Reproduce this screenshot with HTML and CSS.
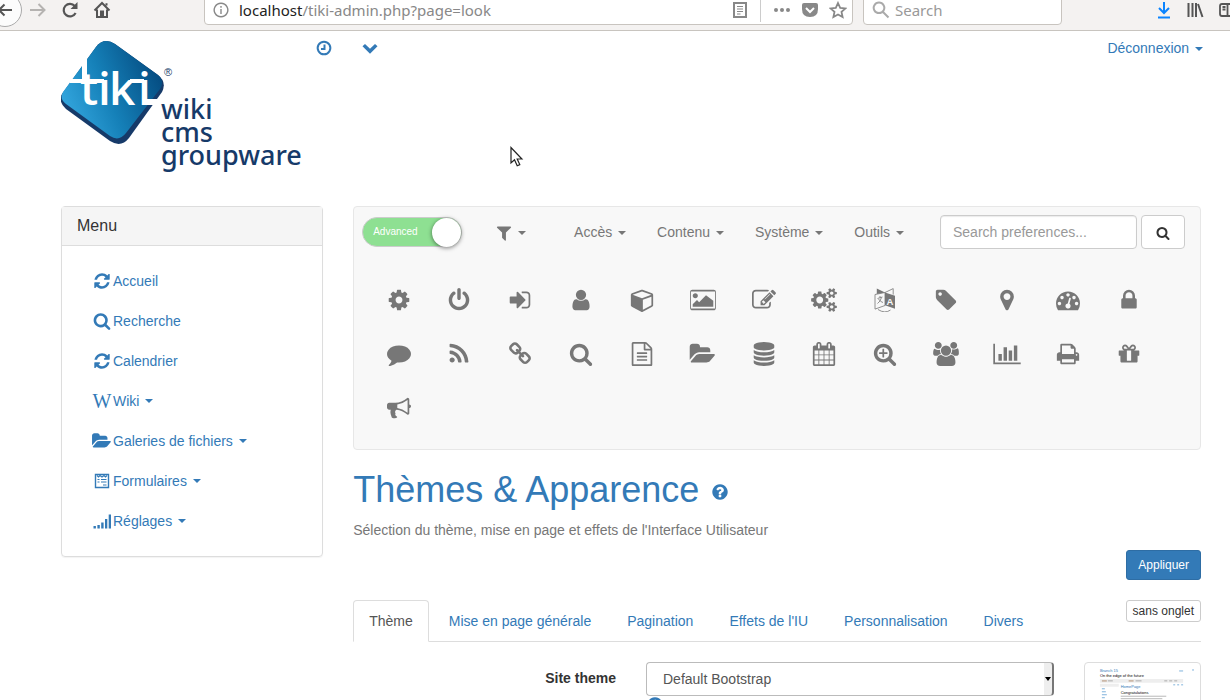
FILE: index.html
```
<!DOCTYPE html>
<html lang="fr">
<head>
    <meta charset="UTF-8">
    <meta name="viewport" content="width=device-width, initial-scale=1.0">
    <title>Thèmes &amp; Apparence</title>
    <link rel="stylesheet" href="styles.css">
</head>
<body>
    <!-- icon sprite -->
    <svg class="sprite" aria-hidden="true">
        <symbol id="i-cog" viewBox="0 0 1792 1792"><path d="M1152 896q0-106-75-181t-181-75-181 75-75 181 75 181 181 75 181-75 75-181zm512-109v222q0 12-8 23t-20 13l-185 28q-19 54-39 91 35 50 107 138 10 12 10 25t-9 23q-27 37-99 108t-94 71q-12 0-26-9l-138-108q-44 23-91 38-16 136-29 186-7 28-36 28h-222q-14 0-24.5-8.5t-11.5-21.5l-28-184q-49-16-90-37l-141 107q-10 9-25 9-14 0-25-11-126-114-165-168-7-10-7-23 0-12 8-23 15-21 51-66.5t54-70.5q-27-50-41-99l-183-27q-13-2-21-12.5t-8-23.5v-222q0-12 8-23t19-13l186-28q14-46 39-92-40-57-107-138-10-12-10-24 0-10 9-23 26-36 98.5-107.5t94.5-71.5q13 0 26 10l138 107q44-23 91-38 16-136 29-186 7-28 36-28h222q14 0 24.5 8.5t11.5 21.5l28 184q49 16 90 37l142-107q9-9 24-9 13 0 25 10 129 119 165 170 7 8 7 22 0 12-8 23-15 21-51 66.5t-54 70.5q26 50 41 98l183 28q13 2 21 12.5t8 23.5z"/></symbol>
        <symbol id="i-power" viewBox="0 0 1792 1792"><path d="M1664 896q0 156-61 298t-164 245-245 164-298 61-298-61-245-164-164-245-61-298q0-182 80.5-343t226.5-270q43-32 95.5-25t83.5 50q32 42 24.5 94.5t-49.5 84.5q-98 74-151.5 181t-53.5 228q0 104 40.5 198.5t109.5 163.5 163.5 109.5 198.5 40.5 198.5-40.5 163.5-109.5 109.5-163.5 40.5-198.5q0-121-53.5-228t-151.5-181q-42-32-49.5-84.5t24.5-94.5q31-43 84-50t95 25q146 109 226.5 270t80.5 343zm-640-768v640q0 52-38 90t-90 38-90-38-38-90v-640q0-52 38-90t90-38 90 38 38 90z"/></symbol>
        <symbol id="i-login" viewBox="0 0 1792 1792"><path d="M1312 896q0 26-19 45l-544 544q-19 19-45 19t-45-19-19-45v-288h-448q-26 0-45-19t-19-45v-384q0-26 19-45t45-19h448v-288q0-26 19-45t45-19 45 19l544 544q19 19 19 45zm352-352v704q0 119-84.5 203.5t-203.5 84.5h-320q-13 0-22.500-9.500t-9.500-22.500q0-4-1-20t-.5-26.500 3-23.500 10-19.500 20.500-6.500h320q66 0 113-47t47-113v-704q0-66-47-113t-113-47h-312l-11.500-1-11.500-3-8-5.500-7-9-2-13.500q0-4-1-20t-.5-26.500 3-23.500 10-19.500 20.500-6.500h320q119 0 203.500 84.500t84.500 203.500z"/></symbol>
        <symbol id="i-user" viewBox="0 0 1792 1792"><path d="M1536 1399q0 109-62.5 187t-150.5 78h-854q-88 0-150.5-78t-62.5-187q0-85 8.5-160.5t31.5-152 58.5-131 94-89 134.5-34.5q131 128 313 128t313-128q76 0 134.5 34.5t94 89 58.5 131 31.5 152 8.5 160.5zm-256-887q0 159-112.5 271.5t-271.5 112.5-271.5-112.5-112.5-271.5 112.5-271.5 271.5-112.5 271.5 112.5 112.5 271.5z"/></symbol>
        <symbol id="i-cube" viewBox="0 0 1664 1792"><path d="M896 1629l640-349v-636l-640 233v752zm-64-865l698-254-698-254-698 254zm832-252v768q0 35-18 65t-49 47l-704 384q-28 16-61 16t-61-16l-704-384q-31-17-49-47t-18-65v-768q0-40 23-73t61-47l704-256q22-8 44-8t44 8l704 256q38 14 61 47t23 73z"/></symbol>
        <symbol id="i-picture" viewBox="0 0 1920 1792"><path d="M576 576q0 80-56 136t-136 56-136-56-56-136 56-136 136-56 136 56 56 136zm1152 384v448h-1536v-192l320-320 160 160 512-512zm96-704h-1728q-13 0-22.500 9.500t-9.500 22.500v1216q0 13 9.500 22.500t22.500 9.500h1728q13 0 22.500-9.500t9.500-22.500v-1216q0-13-9.500-22.500t-22.500-9.500zm96 32v1216q0 66-47 113t-113 47h-1600q-66 0-113-47t-47-113v-1216q0-66 47-113t113-47h1600q66 0 113 47t47 113z"/></symbol>
        <symbol id="i-edit" viewBox="0 0 1792 1792"><path d="M888 1184l116-116-152-152-116 116v56h96v96h56zm440-720q-16-16-33 1l-350 350q-17 17-1 33t33-1l350-350q17-17 1-33zm80 594v190q0 119-84.5 203.500t-203.500 84.500h-832q-119 0-203.500-84.500t-84.500-203.500v-832q0-119 84.500-203.500t203.500-84.500h832q63 0 117 25 15 7 18 23 3 17-9 29l-49 49q-14 14-32 8-23-6-45-6h-832q-66 0-113 47t-47 113v832q0 66 47 113t113 47h832q66 0 113-47t47-113v-126q0-13 9-22l64-64q15-15 35-7t20 29zm-96-738l288 288-672 672h-288v-288zm444 132l-92 92-288-288 92-92q28-28 68-28t68 28l152 152q28 28 28 68t-28 68z"/></symbol>
        <symbol id="i-cogs" viewBox="0 0 1920 1792"><path d="M896 896q0-106-75-181t-181-75-181 75-75 181 75 181 181 75 181-75 75-181zm768 512q0-52-38-90t-90-38-90 38-38 90q0 53 37.500 90.500t90.500 37.500 90.500-37.500 37.500-90.500zm0-1024q0-52-38-90t-90-38-90 38-38 90q0 53 37.500 90.500t90.500 37.500 90.500-37.500 37.500-90.500zm-384 421v185q0 10-7 19.500t-16 10.500l-155 24q-11 35-32 76 34 48 90 115 7 11 7 20 0 12-7 19-23 30-82.500 89.500t-78.500 59.500q-11 0-21-7l-115-90q-37 19-77 31-11 108-23 155-7 24-30 24h-186q-11 0-20-7.500t-10-17.500l-23-153q-34-10-75-31l-118 89q-7 7-20 7-11 0-21-8-144-133-144-160 0-9 7-19 10-14 41-53t47-61q-23-44-35-82l-152-24q-10-1-17-9.500t-7-19.500v-185q0-10 7-19.500t16-10.500l155-24q11-35 32-76-34-48-90-115-7-11-7-20 0-12 7-20 22-30 82-89t79-59q11 0 21 7l115 90q34-18 77-32 11-108 23-154 7-24 30-24h186q11 0 20 7.500t10 17.500l23 153q34 10 75 31l118-89q8-7 20-7 11 0 21 8 144 133 144 160 0 8-7 19-12 16-42 54t-45 60q23 48 34 82l152 23q10 2 17 10.500t7 19.500zm640 533v140q0 16-149 31-12 27-30 52 51 113 51 138 0 4-4 7-122 71-124 71-8 0-46-47t-52-68q-20 2-30 2t-30-2q-14 21-52 68t-46 47q-2 0-124-71-4-3-4-7 0-25 51-138-18-25-30-52-149-15-149-31v-140q0-16 149-31 13-29 30-52-51-113-51-138 0-4 4-7 4-2 35-20t59-34 30-16q8 0 46 46.500t52 67.500q20-2 30-2t30 2q51-71 92-112l6-2q4 0 124 70 4 3 4 7 0 25-51 138 17 23 30 52 149 15 149 31zm0-1024v140q0 16-149 31-12 27-30 52 51 113 51 138 0 4-4 7-122 71-124 71-8 0-46-47t-52-68q-20 2-30 2t-30-2q-14 21-52 68t-46 47q-2 0-124-71-4-3-4-7 0-25 51-138-18-25-30-52-149-15-149-31v-140q0-16 149-31 13-29 30-52-51-113-51-138 0-4 4-7 4-2 35-20t59-34 30-16q8 0 46 46.500t52 67.500q20-2 30-2t30 2q51-71 92-112l6-2q4 0 124 70 4 3 4 7 0 25-51 138 17 23 30 52 149 15 149 31z"/></symbol>
        <symbol id="i-language" viewBox="0 0 24 24">
            <path d="M12 4.500l10 3.200v13l-10-3.500zM3.800.6L12 4.500 3.800 6z"/>
            <path d="M2 6.500l10-2v13l-10 3.600zM12 4.500L20.200.6v6M5 21.500q7 4.500 12.500.5M4.500 10.500l5-1.500M7 8v1.800M8.500 9.500q-1 4-4 6M5.500 11q2 3 4.500 3.500" fill="none" stroke="currentColor" stroke-width=".8"/>
            <text x="13.600" y="16.800" font-family="Liberation Sans, sans-serif" font-weight="bold" font-size="9.500" fill="#f8f8f8">A</text>
        </symbol>
        <symbol id="i-tag" viewBox="0 0 1515 1792"><path d="M448 448q0-53-37.500-90.500t-90.500-37.500-90.500 37.500-37.500 90.500 37.500 90.500 90.500 37.500 90.500-37.500 37.500-90.500zm1067 576q0 53-37 90l-491 492q-39 37-91 37-53 0-90-37l-715-716q-38-37-64.500-101t-26.500-117v-416q0-52 38-90t90-38h416q53 0 117 26.500t102 64.500l715 714q37 39 37 91z"/></symbol>
        <symbol id="i-marker" viewBox="0 0 1792 1792"><path d="M1152 640q0-106-75-181t-181-75-181 75-75 181 75 181 181 75 181-75 75-181zm256 0q0 109-33 179l-364 774q-16 33-47.500 52t-67.500 19-67.500-19-46.500-52l-365-774q-33-70-33-179 0-212 150-362t362-150 362 150 150 362z"/></symbol>
        <symbol id="i-dashboard" viewBox="0 0 1792 1792"><path d="M384 1152q0-53-37.500-90.500t-90.500-37.500-90.500 37.500-37.500 90.500 37.500 90.500 90.500 37.500 90.500-37.500 37.500-90.500zm192-448q0-53-37.500-90.500t-90.500-37.500-90.500 37.500-37.500 90.500 37.500 90.500 90.500 37.500 90.500-37.500 37.500-90.500zm428 481l101-382q6-26-7.500-48.500t-38.500-29.500-48 6.500-30 39.500l-101 382q-60 5-107 43.500t-63 98.500q-20 77 20 146t117 89 146-20 89-117q16-60-6-117t-72-91zm660-33q0-53-37.500-90.500t-90.500-37.500-90.500 37.500-37.500 90.500 37.500 90.500 90.500 37.500 90.500-37.500 37.500-90.500zm-640-640q0-53-37.500-90.500t-90.500-37.500-90.500 37.500-37.500 90.500 37.500 90.500 90.500 37.500 90.500-37.500 37.500-90.500zm448 192q0-53-37.500-90.500t-90.500-37.500-90.500 37.500-37.500 90.500 37.500 90.500 90.500 37.500 90.500-37.500 37.500-90.500zm320 448q0 261-141 483-19 29-54 29h-1402q-35 0-54-29-141-221-141-483 0-182 71-348t191-286 286-191 348-71 348 71 286 191 191 286 71 348z"/></symbol>
        <symbol id="i-lock" viewBox="0 0 1792 1792"><path d="M640 768h512v-192q0-106-75-181t-181-75-181 75-75 181v192zm832 96v576q0 40-28 68t-68 28h-960q-40 0-68-28t-28-68v-576q0-40 28-68t68-28h32v-192q0-184 132-316t316-132 316 132 132 316v192h32q40 0 68 28t28 68z"/></symbol>
        <symbol id="i-comment" viewBox="0 0 1792 1792"><path d="M1792 896q0 174-120 321.500t-326 233-450 85.500q-70 0-145-8-198 175-460 242-49 14-114 22-17 2-30.500-9t-17.500-29v-1q-3-4-.5-12t2-10 4.500-9.500l6-9 7-8.500 8-9q7-8 31-34.500t34.500-38 31-39.500 32.500-51 27-59 26-76q-157-89-247.500-220t-90.500-281q0-174 120-321.500t326-233 450-85.500 450 85.500 326 233 120 321.500z"/></symbol>
        <symbol id="i-rss" viewBox="0 0 1792 1792"><path d="M576 1344q0 80-56 136t-136 56-136-56-56-136 56-136 136-56 136 56 56 136zm512 123q2 28-17 48-18 21-47 21h-135q-25 0-43-16.500t-20-41.500q-22-229-184.500-391.500t-391.500-184.500q-25-2-41.500-20t-16.500-43v-135q0-29 21-47 17-17 43-17h5q160 13 306 80.500t259 181.500q114 113 181.500 259t80.500 306zm512 2q2 27-18 47-18 20-46 20h-143q-26 0-44.500-17.500t-19.500-42.500q-12-215-101-408.500t-231.500-336-336-231.500-408.500-102q-25-1-42.500-19.500t-17.500-43.500v-143q0-28 20-46 18-18 44-18h3q262 13 501.500 120t425.500 294q187 186 294 425.500t120 501.500z"/></symbol>
        <symbol id="i-link" viewBox="0 0 1792 1792"><path d="M1520 1216q0-40-28-68l-208-208q-28-28-68-28-42 0-72 32 3 3 19 18.500t21.500 21.500 15 19 13 25.500 3.500 27.500q0 40-28 68t-68 28q-15 0-27.500-3.500t-25.500-13-19-15-21.500-21.500-18.500-19q-33 31-33 73 0 40 28 68l206 207q27 27 68 27 40 0 68-26l147-146q28-28 28-67zm-703-705q0-40-28-68l-206-207q-28-28-68-28-39 0-68 27l-147 146q-28 28-28 67 0 40 28 68l208 208q27 27 68 27 42 0 72-31-3-3-19-18.500t-21.500-21.500-15-19-13-25.500-3.500-27.500q0-40 28-68t68-28q15 0 27.500 3.500t25.500 13 19 15 21.500 21.500 18.500 19q33-31 33-73zm895 705q0 120-85 203l-147 146q-83 83-203 83-121 0-204-85l-206-207q-83-83-83-203 0-123 88-209l-88-88q-86 88-208 88-120 0-204-84l-208-208q-84-84-84-204t85-203l147-146q83-83 203-83 121 0 204 85l206 207q83 83 83 203 0 123-88 209l88 88q86-88 208-88 120 0 204 84l208 208q84 84 84 204z"/></symbol>
        <symbol id="i-search" viewBox="0 0 1792 1792"><path d="M1216 832q0-185-131.500-316.500t-316.500-131.500-316.500 131.500-131.500 316.500 131.500 316.500 316.500 131.500 316.500-131.500 131.500-316.500zm512 832q0 52-38 90t-90 38q-54 0-90-38l-343-342q-179 124-399 124-143 0-273.500-55.500t-225-150-150-225-55.500-273.500 55.500-273.500 150-225 225-150 273.500-55.500 273.500 55.500 225 150 150 225 55.500 273.500q0 220-124 399l343 343q37 37 37 90z"/></symbol>
        <symbol id="i-file" viewBox="0 0 1792 1792"><path d="M1596 380q28 28 48 76t20 88v1152q0 40-28 68t-68 28h-1344q-40 0-68-28t-28-68v-1600q0-40 28-68t68-28h896q40 0 88 20t76 48zm-444-244v376h376q-10-29-22-41l-313-313q-12-12-41-22zm384 1528v-1024h-416q-40 0-68-28t-28-68v-416h-768v1536h1280zm-1024-864q0-14 9-23t23-9h704q14 0 23 9t9 23v64q0 14-9 23t-23 9h-704q-14 0-23-9t-9-23v-64zm736 224q14 0 23 9t9 23v64q0 14-9 23t-23 9h-704q-14 0-23-9t-9-23v-64q0-14 9-23t23-9h704zm0 256q14 0 23 9t9 23v64q0 14-9 23t-23 9h-704q-14 0-23-9t-9-23v-64q0-14 9-23t23-9h704z"/></symbol>
        <symbol id="i-folder" viewBox="0 0 1856 1792"><path d="M1815 952q0 31-31 66l-336 396q-43 51-120.500 86.500t-143.500 35.500h-1088q-34 0-60.500-13t-26.500-43q0-31 31-66l336-396q43-51 120.500-86.500t143.500-35.500h1088q34 0 60.500 13t26.500 43zm-343-344v160h-832q-94 0-197 47.500t-164 119.500l-337 396-5 6q0-4-.5-12.500t-.5-12.500v-960q0-92 66-158t158-66h320q92 0 158 66t66 158v32h544q92 0 158 66t66 158z"/></symbol>
        <symbol id="i-database" viewBox="0 0 1792 1792"><path d="M896 768q237 0 443-43t325-127v170q0 69-103 128t-280 93.500-385 34.500-385-34.500-280-93.500-103-128v-170q119 84 325 127t443 43zm0 768q237 0 443-43t325-127v170q0 69-103 128t-280 93.500-385 34.500-385-34.500-280-93.500-103-128v-170q119 84 325 127t443 43zm0-384q237 0 443-43t325-127v170q0 69-103 128t-280 93.500-385 34.500-385-34.500-280-93.500-103-128v-170q119 84 325 127t443 43zm0-1152q208 0 385 34.500t280 93.500 103 128v128q0 69-103 128t-280 93.500-385 34.500-385-34.500-280-93.500-103-128v-128q0-69 103-128t280-93.500 385-34.500z"/></symbol>
        <symbol id="i-calendar" viewBox="0 0 1792 1792"><path d="M192 1664h288v-288h-288v288zm352 0h320v-288h-320v288zm-352-352h288v-320h-288v320zm352 0h320v-320h-320v320zm-352-384h288v-288h-288v288zm736 736h320v-288h-320v288zm-384-736h320v-288h-320v288zm768 736h288v-288h-288v288zm-384-352h320v-320h-320v320zm-352-864v-288q0-13-9.500-22.500t-22.500-9.500h-64q-13 0-22.500 9.500t-9.500 22.500v288q0 13 9.500 22.500t22.500 9.500h64q13 0 22.500-9.500t9.500-22.500zm736 864h288v-320h-288v320zm-384-384h320v-288h-320v288zm384 0h288v-288h-288v288zm32-480v-288q0-13-9.500-22.500t-22.500-9.500h-64q-13 0-22.500 9.500t-9.500 22.500v288q0 13 9.500 22.500t22.500 9.500h64q13 0 22.500-9.500t9.500-22.500zm384-64v1280q0 52-38 90t-90 38h-1408q-52 0-90-38t-38-90v-1280q0-52 38-90t90-38h128v-96q0-66 47-113t113-47h64q66 0 113 47t47 113v96h384v-96q0-66 47-113t113-47h64q66 0 113 47t47 113v96h128q52 0 90 38t38 90z"/></symbol>
        <symbol id="i-search-plus" viewBox="0 0 1792 1792"><path d="M1088 800v64q0 13-9.500 22.500t-22.500 9.500h-224v224q0 13-9.500 22.500t-22.500 9.500h-64q-13 0-22.500-9.500t-9.500-22.500v-224h-224q-13 0-22.500-9.500t-9.500-22.500v-64q0-13 9.500-22.500t22.500-9.500h224v-224q0-13 9.500-22.500t22.500-9.500h64q13 0 22.500 9.500t9.500 22.500v224h224q13 0 22.500 9.500t9.500 22.500zm128 32q0-185-131.500-316.500t-316.500-131.500-316.500 131.500-131.500 316.500 131.500 316.500 316.500 131.500 316.500-131.500 131.500-316.500zm512 832q0 52-38 90t-90 38q-54 0-90-38l-343-342q-179 124-399 124-143 0-273.500-55.500t-225-150-150-225-55.500-273.500 55.500-273.500 150-225 225-150 273.500-55.500 273.500 55.500 225 150 150 225 55.500 273.500q0 220-124 399l343 343q37 37 37 90z"/></symbol>
        <symbol id="i-users" viewBox="0 0 1920 1792"><path d="M593 896q-162 5-265 128h-134q-82 0-138-40.500t-56-118.500q0-353 124-353 6 0 43.500 21t97.500 42.500 119 21.500q67 0 133-23-5 37-5 66 0 159 81 256zm1071 637q0 120-73 189.500t-194 69.500h-874q-121 0-194-69.500t-73-189.500q0-53 3.500-103.500t14-109 26.500-108.500 43-97.500 62-81 85.500-53.500 111.500-20q10 0 43 21.500t73 48 107 48 135 21.500 135-21.500 107-48 73-48 43-21.500q61 0 111.500 20t85.500 53.500 62 81 43 97.500 26.500 108.500 14 109 3.500 103.500zm-1024-1277q0 106-75 181t-181 75-181-75-75-181 75-181 181-75 181 75 75 181zm704 384q0 159-112.500 271.500t-271.500 112.500-271.500-112.500-112.500-271.500 112.500-271.500 271.500-112.500 271.500 112.500 112.500 271.500zm576 225q0 78-56 118.500t-138 40.500h-134q-103-123-265-128 93-135 93-294 0-29-5-66 66 23 133 23 59 0 119-21.500t97.500-42.500 43.500-21q112 0 112 353zm-128-609q0 106-75 181t-181 75-181-75-75-181 75-181 181-75 181 75 75 181z"/></symbol>
        <symbol id="i-chart" viewBox="0 0 2048 1792"><path d="M640 896v512h-256v-512h256zm384-512v1024h-256v-1024h256zm1024 1152v128h-2048v-1536h128v1408h1920zm-640-896v768h-256v-768h256zm384-384v1152h-256v-1152h256z"/></symbol>
        <symbol id="i-print" viewBox="0 0 1792 1792"><path d="M448 1536h896v-256h-896v256zm0-640h896v-384h-160q-40 0-68-28t-28-68v-160h-640v640zm1152 64q0-26-19-45t-45-19-45 19-19 45 19 45 45 19 45-19 19-45zm128 0v416q0 13-9.500 22.500t-22.500 9.500h-224v160q0 40-28 68t-68 28h-960q-40 0-68-28t-28-68v-160h-224q-13 0-22.500-9.500t-9.500-22.500v-416q0-79 56.500-135.500t135.500-56.500h64v-544q0-40 28-68t68-28h672q40 0 88 20t76 48l152 152q28 28 48 76t20 88v256h64q79 0 135.500 56.500t56.500 135.500z"/></symbol>
        <symbol id="i-gift" viewBox="0 0 1792 1792"><path d="M1056 1356v-716h-320v716q0 25 18 38.500t46 13.500h192q28 0 46-13.500t18-38.500zm-456-844h195l-126-161q-26-31-69-31-40 0-68 28t-28 68 28 68 68 28zm688-96q0-40-28-68t-68-28q-43 0-69 31l-125 161h194q40 0 68-28t28-68zm376 256v320q0 14-9 23t-23 9h-96v416q0 40-28 68t-68 28h-1088q-40 0-68-28t-28-68v-416h-96q-14 0-23-9t-9-23v-320q0-14 9-23t23-9h440q-93 0-158.500-65.500t-65.500-158.500 65.500-158.500 158.500-65.500q107 0 168 77l128 165 128-165q61-77 168-77 93 0 158.500 65.500t65.500 158.500-65.500 158.500-158.500 65.500h440q14 0 23 9t9 23z"/></symbol>
        <symbol id="i-bullhorn" viewBox="0 0 1792 1792"><path d="M1664 640q53 0 90.500 37.500t37.500 90.500-37.500 90.500-90.500 37.500v384q0 52-38 90t-90 38q-417-347-812-380-58 19-91 66t-31 100.500 40 92.500q-20 33-23 65.500t6 58 33.500 55 48 50 61.500 50.500q-29 58-111.500 83t-168.500 11.500-132-55.500q-7-23-29.500-87.500t-32-94.500-23-89-15-101 3.500-98.500 22-110.500h-122q-66 0-113-47t-47-113v-192q0-66 47-113t113-47h480q435 0 896-384 52 0 90 38t38 90v384zm-128 604v-954q-394 302-768 343v270q377 42 768 341z"/></symbol>
        <symbol id="i-refresh" viewBox="0 0 1792 1792"><path d="M1639 1056q0 5-1 7-64 268-268 434.500t-478 166.500q-146 0-282.500-55t-243.500-157l-129 129q-19 19-45 19t-45-19-19-45v-448q0-26 19-45t45-19h448q26 0 45 19t19 45-19 45l-137 137q71 66 161 102t187 36q134 0 250-65t186-179q11-17 53-117 8-23 30-23h192q13 0 22.500 9.500t9.500 22.500zm25-800v448q0 26-19 45t-45 19h-448q-26 0-45-19t-19-45 19-45l138-138q-148-137-349-137-134 0-250 65t-186 179q-11 17-53 117-8 23-30 23h-199q-13 0-22.500-9.500t-9.500-22.500v-7q65-268 270-434.500t480-166.500q146 0 284 55.500t245 156.500l130-129q19-19 45-19t45 19 19 45z"/></symbol>
        <symbol id="i-filter" viewBox="0 0 1408 1792"><path d="M1403 295q17 41-14 70l-493 493v742q0 42-39 59-13 5-25 5-27 0-45-19l-256-256q-19-19-19-45v-486l-493-493q-31-29-14-70 17-39 59-39h1280q42 0 59 39z"/></symbol>
        <symbol id="i-help" viewBox="0 0 1792 1792"><path d="M1024 1376v-192q0-14-9-23t-23-9h-192q-14 0-23 9t-9 23v192q0 14 9 23t23 9h192q14 0 23-9t9-23zm256-672q0-88-55.500-163t-138.500-116-170-41q-243 0-371 213-15 24 8 42l132 100q7 6 19 6 16 0 25-12 53-68 86-92 34-24 86-24 48 0 85.500 26t37.500 59q0 38-20 61t-68 45q-63 28-115.500 86.500t-52.500 125.500v36q0 14 9 23t23 9h192q14 0 23-9t9-23q0-19 21.500-49.500t54.500-49.500q32-18 49-28.500t46-35 44.500-48 28-60.500 12.500-81zm384 192q0 209-103 385.500t-279.500 279.500-385.500 103-385.500-103-279.500-279.500-103-385.500 103-385.500 279.500-279.500 385.500-103 385.500 103 279.500 279.500 103 385.500z"/></symbol>
        <symbol id="i-clock" viewBox="0 0 16 16"><path d="M8 1.700a6.300 6.300 0 1 0 .01 0zM8.500 4.500V9H5" fill="none" stroke="currentColor" stroke-width="2"/></symbol>
        <symbol id="i-chevron" viewBox="0 0 16 16"><path d="M.5 6.300L3 3.900l5 4.900 5-4.900 2.500 2.400L8 13.700z"/></symbol>
        <symbol id="i-form" viewBox="0 0 18 18"><path d="M2.500 2.500h13v13h-13z" fill="none" stroke="currentColor" stroke-width="1.400"/><path d="M4 3.500l1.500 1.500L7 3.500 9 5l2-1.500L12.500 5 14 3.500M4.500 7.500h2M8 7.500h5.500M4.500 10h2M8 10h5.500M10 13h3.500" fill="none" stroke="currentColor" stroke-width="1.200"/></symbol>
        <symbol id="i-signal" viewBox="0 0 18 18"><path d="M.5 14h2.400v2.500H.5zM4.400 13h2.400v3.500H4.400zM8.200 10.500h2.400v6H8.200zM12 7h2.300v9.500H12zM15.700 2.500H18v14h-2.300z"/></symbol>
    </svg>

    <div class="browser-bar">
        <button class="back" aria-label="Back"><svg width="20" height="20" viewBox="0 0 20 20"><path d="M17 10H4M9.500 4.500L4 10l5.500 5.500" fill="none" stroke="#555" stroke-width="2"/></svg></button>
        <button class="nav-btn faded" aria-label="Forward"><svg width="20" height="20" viewBox="0 0 20 20"><path d="M2 10h14M10.500 4l6 6-6 6" fill="none" stroke="currentColor" stroke-width="2"/></svg></button>
        <button class="nav-btn" aria-label="Reload"><svg width="20" height="20" viewBox="0 0 20 20"><path d="M15.600 13A6.300 6.300 0 1 1 14.800 6" fill="none" stroke="currentColor" stroke-width="2.200"/><path d="M17.500 2v7h-7z"/></svg></button>
        <button class="nav-btn" aria-label="Home"><svg width="20" height="20" viewBox="0 0 20 20"><path d="M2.500 10.500L10 3l7.500 7.500M14.500 5.500V3.200M5 9.500V17h10V9.500" fill="none" stroke="currentColor" stroke-width="2"/><path d="M8 10.500h4V17H8z"/></svg></button>
        <div class="url-bar">
            <svg width="16" height="16" viewBox="0 0 16 16"><path d="M8 1.200a6.800 6.800 0 1 0 .01 0zM8 7v5M8 4v1.700" fill="none" stroke="#888" stroke-width="1.400"/></svg>
            <span class="url"><b>localhost</b>/tiki-admin.php?page=look</span>
            <svg width="16" height="18" viewBox="0 0 16 18"><path d="M2 2h12v14H2z" fill="none" stroke="#888" stroke-width="2"/><path d="M5 5.500h6M5 8h6M5 10.500h6M5 13h3.500" stroke="#888"/></svg>
            <span class="split"></span>
            <svg width="18" height="18" viewBox="0 0 18 18" fill="#888"><circle cx="3" cy="9" r="2"/><circle cx="9" cy="9" r="2"/><circle cx="15" cy="9" r="2"/></svg>
            <svg width="18" height="18" viewBox="0 0 18 18"><path d="M3 2h12q2 0 2 2v4q0 8-8 8T1 8V4q0-2 2-2z" fill="#888"/><path d="M5 7l4 4 4-4" fill="none" stroke="#fff" stroke-width="2"/></svg>
            <svg width="18" height="18" viewBox="0 0 18 18"><path d="M9 2l2.200 4.800 5.300.6-4 3.500 1.100 5.200L9 13.500l-4.600 2.600 1.100-5.200-4-3.500 5.300-.6z" fill="none" stroke="#888" stroke-width="1.800"/></svg>
        </div>
        <label class="search-bar">
            <svg width="18" height="18" viewBox="0 0 18 18"><path d="M7 1.500a5.300 5.300 0 1 0 .01 0zM11 11l5.500 5.500" fill="none" stroke="#aaa" stroke-width="2"/></svg>
            <input type="text" placeholder="Search" aria-label="Search">
        </label>
        <div class="bar-end">
            <svg width="16" height="20" viewBox="0 0 16 20"><path d="M8 2v11M3 8l5 5 5-5M2 17.500h12" fill="none" stroke="#0a84ff" stroke-width="2"/></svg>
            <svg width="18" height="20" viewBox="0 0 18 20"><path d="M2.500 3v14M6.500 3v14M10 3v14M12 4l4.500 13" fill="none" stroke="#555" stroke-width="2"/></svg>
            <svg width="18" height="20" viewBox="0 0 18 20"><path d="M4 4h14v12H4q-2 0-2-2V6q0-2 2-2zM9.500 4v12M4.500 7h3M4.500 9.500h3" fill="none" stroke="#555" stroke-width="1.800"/></svg>
        </div>
    </div>

    <div class="page">
        <header class="top">
            <a href="#" class="logo" aria-label="Tiki">
                <svg width="242" height="136" viewBox="0 0 242 136">
                    <defs>
                        <linearGradient id="blue" x1="0" y1=".7" x2="1" y2=".3">
                            <stop offset="0" stop-color="#35a8e0"/>
                            <stop offset=".45" stop-color="#1580b8"/>
                            <stop offset="1" stop-color="#04497e"/>
                        </linearGradient>
                    </defs>
                    <path d="M35 7Q43-3 54 4l43 31q9 7 4 17L68 98q-8 10-19 3L5 69q-8-7-4-15z" fill="#163a69"/>
                    <path d="M35 7Q43-3 54 4l43 31q7 6 2 14L65 93q-7 9-16 3L5 64q-7-5-3-12z" fill="url(#blue)"/>
                    <path d="M21 16h5v25h-5zM9 39h34v4H9zM69 39h14v4H69zM82 59h15v6H82z" fill="#fff"/>
                    <g class="logo-name">
                        <text x="19" y="65">t</text>
                        <text x="37" y="65">i</text>
                        <text x="48" y="65">k</text>
                        <text x="77" y="65">i</text>
                    </g>
                    <text class="logo-reg" x="103" y="36">®</text>
                    <g class="logo-tag">
                        <text x="100" y="79">wiki</text>
                        <text x="100" y="102">cms</text>
                        <text x="100" y="125">groupware</text>
                    </g>
                </svg>
            </a>
            <a href="#" class="quick" aria-label="Récent"><svg class="icon"><use href="#i-clock"/></svg></a>
            <a href="#" class="quick" aria-label="Ouvrir"><svg class="icon"><use href="#i-chevron"/></svg></a>
            <a href="#" class="logout">Déconnexion <i class="caret"></i></a>
        </header>

        <div class="columns">
            <aside class="panel">
                <h3>Menu</h3>
                <ul>
                    <li><a href="#"><svg class="icon"><use href="#i-refresh"/></svg>Accueil</a></li>
                    <li><a href="#"><svg class="icon"><use href="#i-search"/></svg>Recherche</a></li>
                    <li><a href="#"><svg class="icon"><use href="#i-refresh"/></svg>Calendrier</a></li>
                    <li><a href="#"><span class="wiki-w">W</span>Wiki <i class="caret"></i></a></li>
                    <li><a href="#"><svg class="icon"><use href="#i-folder"/></svg>Galeries de fichiers <i class="caret"></i></a></li>
                    <li><a href="#"><svg class="icon"><use href="#i-form"/></svg>Formulaires <i class="caret"></i></a></li>
                    <li><a href="#"><svg class="icon"><use href="#i-signal"/></svg>Réglages <i class="caret"></i></a></li>
                </ul>
            </aside>

            <main>
                <nav class="admin-bar">
                    <div class="admin-nav">
                        <label class="toggle"><input type="checkbox" checked><span>Advanced</span></label>
                        <a href="#" aria-label="Filtre"><svg class="icon"><use href="#i-filter"/></svg> <i class="caret"></i></a>
                        <a href="#">Accès <i class="caret"></i></a>
                        <a href="#">Contenu <i class="caret"></i></a>
                        <a href="#">Système <i class="caret"></i></a>
                        <a href="#">Outils <i class="caret"></i></a>
                        <form class="pref-search">
                            <input type="text" placeholder="Search preferences..." aria-label="Search preferences">
                            <button type="button" aria-label="Rechercher"><svg class="icon"><use href="#i-search"/></svg></button>
                        </form>
                    </div>
                    <div class="admin-icons">
                        <a href="#" aria-label="Général"><svg class="icon"><use href="#i-cog"/></svg></a>
                        <a href="#" aria-label="Fonctionnalités"><svg class="icon"><use href="#i-power"/></svg></a>
                        <a href="#" aria-label="Connexion"><svg class="icon"><use href="#i-login"/></svg></a>
                        <a href="#" aria-label="Utilisateur"><svg class="icon"><use href="#i-user"/></svg></a>
                        <a href="#" aria-label="Profils"><svg class="icon"><use href="#i-cube"/></svg></a>
                        <a href="#" aria-label="Apparence"><svg class="icon"><use href="#i-picture"/></svg></a>
                        <a href="#" aria-label="Édition"><svg class="icon"><use href="#i-edit"/></svg></a>
                        <a href="#" aria-label="Modules"><svg class="icon"><use href="#i-cogs"/></svg></a>
                        <a href="#" aria-label="Langue"><svg class="icon"><use href="#i-language"/></svg></a>
                        <a href="#" aria-label="Étiquettes"><svg class="icon"><use href="#i-tag"/></svg></a>
                        <a href="#" aria-label="Cartes"><svg class="icon"><use href="#i-marker"/></svg></a>
                        <a href="#" aria-label="Performance"><svg class="icon"><use href="#i-dashboard"/></svg></a>
                        <a href="#" aria-label="Sécurité"><svg class="icon"><use href="#i-lock"/></svg></a>
                        <a href="#" aria-label="Commentaires"><svg class="icon"><use href="#i-comment"/></svg></a>
                        <a href="#" aria-label="RSS"><svg class="icon"><use href="#i-rss"/></svg></a>
                        <a href="#" aria-label="Connexions"><svg class="icon"><use href="#i-link"/></svg></a>
                        <a href="#" aria-label="Recherche"><svg class="icon"><use href="#i-search"/></svg></a>
                        <a href="#" aria-label="Articles"><svg class="icon"><use href="#i-file"/></svg></a>
                        <a href="#" aria-label="Fichiers"><svg class="icon"><use href="#i-folder"/></svg></a>
                        <a href="#" aria-label="Données"><svg class="icon"><use href="#i-database"/></svg></a>
                        <a href="#" aria-label="Calendrier"><svg class="icon"><use href="#i-calendar"/></svg></a>
                        <a href="#" aria-label="Zoom"><svg class="icon"><use href="#i-search-plus"/></svg></a>
                        <a href="#" aria-label="Communauté"><svg class="icon"><use href="#i-users"/></svg></a>
                        <a href="#" aria-label="Statistiques"><svg class="icon"><use href="#i-chart"/></svg></a>
                        <a href="#" aria-label="Imprimer"><svg class="icon"><use href="#i-print"/></svg></a>
                        <a href="#" aria-label="Paquets"><svg class="icon"><use href="#i-gift"/></svg></a>
                        <a href="#" aria-label="Publicité"><svg class="icon"><use href="#i-bullhorn"/></svg></a>
                    </div>
                </nav>

                <h1><a href="#">Thèmes &amp; Apparence</a> <a href="#" class="help" aria-label="Aide"><svg class="icon"><use href="#i-help"/></svg></a></h1>
                <p class="description">Sélection du thème, mise en page et effets de l'Interface Utilisateur</p>

                <div class="apply"><button type="button">Appliquer</button></div>

                <div class="tabs">
                    <a href="#" class="active">Thème</a>
                    <a href="#">Mise en page générale</a>
                    <a href="#">Pagination</a>
                    <a href="#">Effets de l'IU</a>
                    <a href="#">Personnalisation</a>
                    <a href="#">Divers</a>
                    <button type="button">sans onglet</button>
                </div>

                <div class="field-row">
                    <label for="theme">Site theme</label>
                    <div class="field">
                        <div class="select-wrap">
                            <select id="theme"><option>Default Bootstrap</option></select>
                        </div>
                        <a href="#" class="help" aria-label="Aide"><svg class="icon"><use href="#i-help"/></svg></a>
                    </div>
                    <div class="thumb">
                        <svg viewBox="0 0 108 80" aria-hidden="true">
                            <text x="11" y="5" fill="#337ab7">Branch 15</text>
                            <text x="11" y="10">On the edge of the future</text>
                            <path d="M11 12h84v4H11zM11 17h19v3H11z" fill="#eee"/>
                            <path d="M13 13h5v2h-5zM40 13h5v2h-5z" fill="#ccb8a8"/>
                            <path d="M19 14h5M47 14h6M76 14h3M81 14h3M86 14h3" stroke="#aaa"/>
                            <path d="M13 22h3M13 25h4M13 28h5M13 31h3M13 34h5M13 37h3M91 4h4M104 3h2M85 18h2M89 18h2M93 18h2" stroke="#7fb2dc"/>
                            <text x="32" y="21" fill="#337ab7">HomePage</text>
                            <text x="32" y="27">Congratulations</text>
                            <path d="M32 29.500h46M32 32h42M32 34.500h16" stroke="#999" stroke-width=".7"/>
                            <path d="M50 33.500h11v2H50z" fill="#2a9134"/>
                        </svg>
                    </div>
                </div>
            </main>
        </div>
    </div>

    <!-- mouse pointer -->
    <svg class="pointer" width="14" height="22" viewBox="0 0 14 22" aria-hidden="true"><path d="M1 1.500v15.500l3.500-3.200 2.700 6 2.600-1.200-2.600-5.600h4.700z" fill="#fff" stroke="#222" stroke-width="1.200"/></svg>
</body>
</html>
```

FILE: styles.css
```
* {
    box-sizing: border-box;
}

body {
    margin: 0;
    font-family: "Liberation Sans", Arial, sans-serif;
    font-size: 14px;
    line-height: 20px;
    color: #333;
    background-color: #fff;
    overflow: hidden;
    height: 100vh;
}

a {
    color: #337ab7;
    text-decoration: none;
}

button, input, select {
    font-family: inherit;
    font-size: 14px;
}

.sprite {
    display: none;
}

.icon {
    width: 22px;
    height: 18px;
    fill: currentColor;
    flex: none;
}

.caret {
    display: inline-block;
    margin-left: 2px;
    vertical-align: middle;
    border-top: 4px solid;
    border-left: 4px solid transparent;
    border-right: 4px solid transparent;
}

/* browser toolbar */
.browser-bar {
    display: flex;
    align-items: flex-end;
    height: 31px;
    background-color: #f4f2f1;
    border-bottom: 1px solid #c8c4bf;
    overflow: hidden;
    font-family: "Noto Sans", sans-serif;
}

.browser-bar svg {
    flex: none;
}

.browser-bar button {
    display: flex;
    align-items: center;
    justify-content: center;
    flex: none;
    padding: 0;
    background: none;
    border: none;
    color: #555;
    fill: #555;
}

.browser-bar .back {
    width: 34px;
    height: 34px;
    margin-left: -12px;
    margin-bottom: 3px;
    border: 1px solid #aaa;
    border-radius: 50%;
    background-color: #fcfcfc;
}

.browser-bar .nav-btn {
    width: 32px;
    height: 40px;
}

.browser-bar .faded {
    color: #b5b3b1;
}

.url-bar, .search-bar {
    display: flex;
    align-items: center;
    height: 30px;
    margin-bottom: 5px;
    background-color: #fff;
    border: 1px solid #c8c4bf;
    border-radius: 4px;
}

.url-bar {
    flex: 1;
    gap: 10px;
    margin-left: 86px;
    padding: 0 5px 0 8px;
}

.url {
    flex: 1;
    color: #888;
    font-size: 15px;
}

.url b {
    font-weight: normal;
    color: #222;
}

.split {
    width: 1px;
    height: 24px;
    margin: 0 2px;
    background-color: #ccc;
}

.search-bar {
    width: 199px;
    margin-left: 10px;
    padding: 0 8px;
    gap: 5px;
}

.search-bar input {
    width: 100%;
    border: none;
    outline: none;
    padding: 0;
    font-size: 15px;
}

.search-bar input::placeholder {
    color: #999;
}

.bar-end {
    display: flex;
    gap: 14px;
    width: 168px;
    margin-bottom: 10px;
    padding-left: 94px;
}

/* page */
.page {
    padding: 7px 29px 0 61px;
}

.top {
    display: flex;
    align-items: flex-start;
    height: 168px;
}

.logo {
    width: 252px;
    padding-top: 2px;
}

.logo-name {
    font-family: "Open Sans", sans-serif;
    font-weight: 600;
    font-size: 46px;
    fill: #fff;
}

.logo-reg {
    font-size: 11px;
    fill: #163a69;
}

.logo-tag {
    font-family: "Noto Sans", sans-serif;
    font-weight: 500;
    font-size: 27px;
    fill: #163a69;
}

.quick {
    display: flex;
    width: 46px;
    padding-top: 2px;
}

.quick .icon {
    height: 16px;
}

.logout {
    margin-left: auto;
    margin-right: -2px;
}

.columns {
    display: grid;
    grid-template-columns: 23% 1fr;
    gap: 30px;
    align-items: start;
}

/* side menu */
.panel {
    border: 1px solid #ddd;
    border-radius: 4px;
    box-shadow: 0 1px 1px rgba(0, 0, 0, 0.05);
}

.panel h3 {
    margin: 0;
    padding: 9px 15px;
    font-size: 16px;
    font-weight: normal;
    background-color: #f5f5f5;
    border-bottom: 1px solid #ddd;
}

.panel ul {
    list-style: none;
    margin: 0;
    padding: 15px 29px;
}

.panel a {
    display: flex;
    align-items: center;
    height: 40px;
}

.panel .caret {
    margin-left: 6px;
}

.wiki-w {
    width: 22px;
    font-family: "Liberation Serif", serif;
    font-size: 20px;
    text-align: center;
}

/* admin navigation */
.admin-bar {
    background-color: #f8f8f8;
    border: 1px solid #e7e7e7;
    border-radius: 4px;
    padding: 8px 15px 14px 8px;
}

.admin-nav {
    display: flex;
    align-items: center;
    height: 34px;
}

.admin-nav a {
    padding: 0 15px 0 16px;
    color: #777;
}

.admin-nav .icon {
    width: 16px;
    height: 18px;
    vertical-align: middle;
}

.toggle {
    width: 100px;
    margin-right: 18px;
}

.toggle + a {
    margin-right: 17px;
}

.toggle input {
    position: absolute;
    opacity: 0;
}

.toggle span {
    display: flex;
    align-items: center;
    justify-content: space-between;
    height: 30px;
    padding-left: 10px;
    font-size: 10px;
    line-height: 32px;
    color: #fff;
    background-color: #8ee092;
    border: 1px solid #ccc;
    border-radius: 15px;
}

.toggle span::after {
    content: "";
    width: 29px;
    height: 29px;
    background-color: #fff;
    border-radius: 50%;
    box-shadow: 0 1px 4px rgba(0, 0, 0, 0.5);
}

.pref-search {
    display: flex;
    gap: 4px;
    margin-left: auto;
}

.pref-search input {
    width: 197px;
    height: 34px;
    padding: 6px 12px;
    border: 1px solid #ccc;
    border-radius: 4px;
    box-shadow: inset 0 1px 1px rgba(0, 0, 0, 0.08);
}

.pref-search input::placeholder {
    color: #999;
}

.pref-search button {
    width: 44px;
    height: 34px;
    padding: 0;
    color: #333;
    background-color: #fff;
    border: 1px solid #ccc;
    border-radius: 4px;
}

.pref-search .icon {
    height: 14px;
}

.admin-icons {
    display: grid;
    grid-template-columns: repeat(13, 1fr);
    grid-auto-rows: 54px;
    margin: 24px 26px 0 6px;
}

.admin-icons a {
    display: flex;
    align-items: center;
    justify-content: center;
    color: #777;
}

.admin-icons .icon {
    width: 30px;
    height: 24px;
}

/* content */
h1 {
    margin: 20px 0 10px;
    font-size: 36px;
    font-weight: normal;
    line-height: 40px;
}

h1 .icon {
    vertical-align: middle;
}

.description {
    margin: 0 0 10px;
    color: #777;
}

.apply {
    display: flex;
    justify-content: flex-end;
    margin-bottom: 20px;
}

.apply button {
    height: 30px;
    padding: 0 11px;
    font-size: 12px;
    color: #fff;
    background-color: #337ab7;
    border: 1px solid #2e6da4;
    border-radius: 3px;
}

.tabs {
    display: flex;
    align-items: flex-start;
    gap: 4px;
    border-bottom: 1px solid #ddd;
}

.tabs a {
    margin-bottom: -1px;
    padding: 10px 15px;
    border: 1px solid transparent;
    border-radius: 4px 4px 0 0;
}

.tabs .active {
    color: #555;
    background-color: #fff;
    border-color: #ddd;
    border-bottom-color: #fff;
}

.tabs button {
    height: 22px;
    margin-left: auto;
    padding: 0 6px;
    font-size: 12px;
    color: #333;
    background-color: #fff;
    border: 1px solid #ccc;
    border-radius: 3px;
}

.field-row {
    display: grid;
    grid-template-columns: 31% 1fr 117px;
    gap: 30px;
    padding-top: 20px;
}

.field-row label {
    padding-top: 6px;
    font-weight: bold;
    text-align: right;
}

.select-wrap {
    position: relative;
    height: 34px;
}

.select-wrap select {
    appearance: none;
    width: 100%;
    height: 34px;
    padding: 0 16px;
    color: #555;
    background: linear-gradient(#eee, #eee) right / 8px 100% no-repeat #fff;
    border: 1px solid #bbb;
    border-right: 2px solid #777;
    border-radius: 4px;
}

/* arrow over the select */
.select-wrap::after {
    content: "";
    position: absolute;
    top: 15px;
    right: 3px;
    border-top: 4px solid #000;
    border-left: 3px solid transparent;
    border-right: 3px solid transparent;
}

.field .icon {
    width: 18px;
}

.thumb {
    padding: 4px;
    border: 1px solid #ddd;
    border-radius: 4px;
    font-size: 4px;
}

.thumb svg {
    display: block;
    width: 100%;
}

.pointer {
    position: absolute;
    left: 510px;
    top: 146px;
}
```
